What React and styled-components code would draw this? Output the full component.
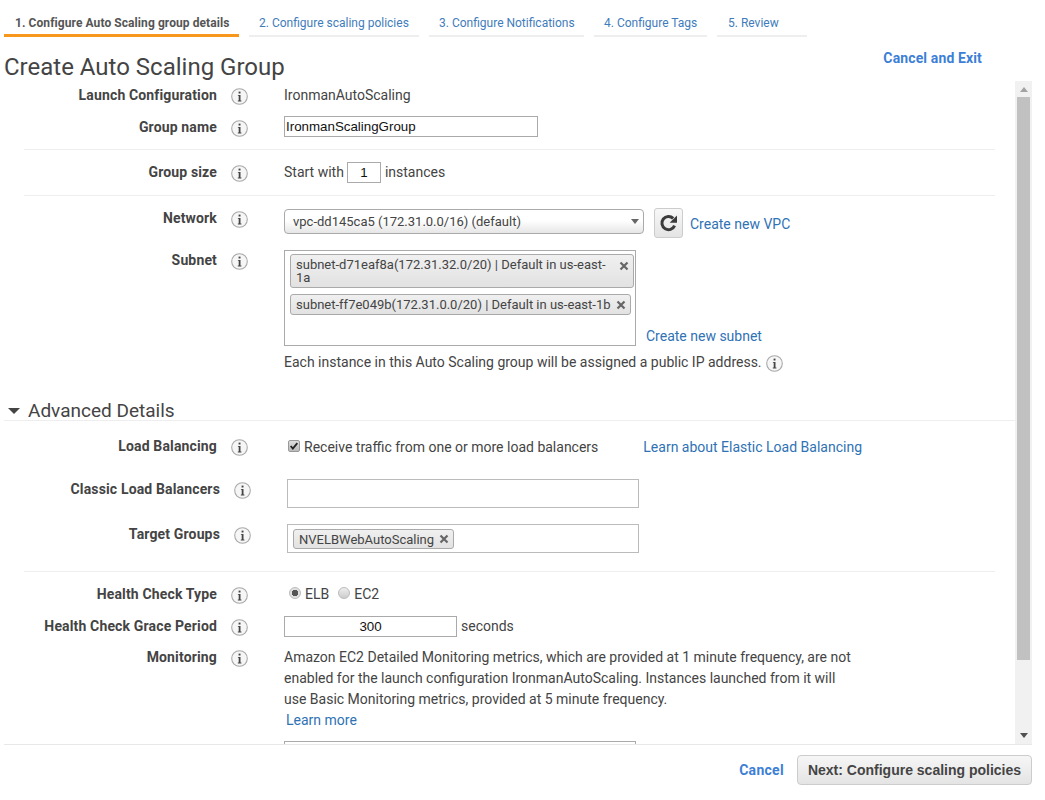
import React from 'react';
import styled, { createGlobalStyle } from 'styled-components';

const GlobalStyle = createGlobalStyle`
  html, body {
    margin: 0;
    height: 800px;
    overflow: hidden;
    background: #fff;
    font-family: Roboto, "Liberation Sans", sans-serif;
    font-size: 14px;
    color: #444;
  }
`;

const tabs = [
  { label: '1. Configure Auto Scaling group details', width: 235, pad: 11, active: true },
  { label: '2. Configure scaling policies', width: 170, pad: 10 },
  { label: '3. Configure Notifications', width: 155, pad: 10 },
  { label: '4. Configure Tags', width: 113, pad: 10 },
  { label: '5. Review', width: 90, pad: 11 }
];

const InfoIcon = () => (
  <InfoSvg viewBox="0 0 17 17">
    <circle cx="8.5" cy="8.5" r="7.8" fill="#f6f6f6" stroke="#a8a8a8" strokeWidth="1.1" />
    <rect x="7.6" y="3.6" width="1.9" height="1.9" fill="#444" />
    <path d="M6.9 6.9h2.6v5.6h.9v.9H6.8v-.9h.9V7.8h-.8z" fill="#444" />
  </InfoSvg>
);

const CloseIcon = () => (
  <CloseSvg viewBox="0 0 10 10">
    <path d="M1.5 1.5l7 7M8.5 1.5l-7 7" stroke="#666" strokeWidth="2.2" />
  </CloseSvg>
);

const RefreshIcon = () => (
  <svg viewBox="0 0 20 20" width="20" height="20">
    <path d="M15.6 12.6A6.6 6.6 0 1 1 14.2 5.4" fill="none" stroke="#3c3c3c" strokeWidth="3" />
    <path d="M18 2.4v7.4h-7.4z" fill="#3c3c3c" />
  </svg>
);

const Field = ({ label, wide, children }) => (
  <>
    <Label $wide={wide}>{label}</Label>
    <InfoIcon />
    <Value>{children}</Value>
  </>
);

export default function App() {
  return (
    <Page>
      <GlobalStyle />
      <Tabs>
        {tabs.map(tab => (
          <Tab key={tab.label} $active={tab.active} $width={tab.width} $pad={tab.pad}>
            {tab.label}
          </Tab>
        ))}
      </Tabs>
      <Header>
        <Title>Create Auto Scaling Group</Title>
        <CancelExit href="#">Cancel and Exit</CancelExit>
      </Header>
      <Panel>
        <Form>
          <Row $mt={4}>
            <Field label="Launch Configuration">IronmanAutoScaling</Field>
          </Row>
          <Row $mt={12}>
            <Field label="Group name">
              <TextInput $width={254} $lift readOnly value="IronmanScalingGroup" />
            </Field>
          </Row>
          <Divider $mt={12} />
          <Row $mt={12}>
            <Field label="Group size">
              <Inline $top $gap={4}>
                Start with
                <SizeInput $width={34} $center readOnly value="1" />
                instances
              </Inline>
            </Field>
          </Row>
          <Divider $mt={12} />
          <Row $mt={12}>
            <Field label="Network">
              <Inline $top $gap={10}>
                <Select>
                  vpc-dd145ca5 (172.31.0.0/16) (default)
                  <Caret />
                </Select>
                <RefreshButton>
                  <RefreshIcon />
                </RefreshButton>
                <VpcLink href="#">Create new VPC</VpcLink>
              </Inline>
            </Field>
          </Row>
          <Row $mt={12}>
            <Field label="Subnet">
              <SubnetRow>
                <ChipBox>
                  <Chip $wrap>
                    <span>subnet-d71eaf8a(172.31.32.0/20) | Default in us-east-1a</span>
                    <CloseIcon />
                  </Chip>
                  <Chip>
                    <span>subnet-ff7e049b(172.31.0.0/20) | Default in us-east-1b</span>
                    <CloseIcon />
                  </Chip>
                </ChipBox>
                <LinkText href="#">Create new subnet</LinkText>
              </SubnetRow>
              <Note>
                Each instance in this Auto Scaling group will be assigned a public IP address.
                <InfoIcon />
              </Note>
            </Field>
          </Row>
          <AdvancedHeader>
            <Triangle />
            Advanced Details
          </AdvancedHeader>
          <Row $mt={15}>
            <Field label="Load Balancing">
              <Inline $gap={4} $indent={4} $drop={1}>
                <Checkbox>
                  <svg viewBox="0 0 12 12" width="10" height="10">
                    <path d="M2 6l2.6 3L10 2.5" fill="none" stroke="#222" strokeWidth="2.2" />
                  </svg>
                </Checkbox>
                Receive traffic from one or more load balancers
                <LinkText href="#" $left={41}>Learn about Elastic Load Balancing</LinkText>
              </Inline>
            </Field>
          </Row>
          <Row $mt={22}>
            <Field label="Classic Load Balancers" wide>
              <ChipInput />
            </Field>
          </Row>
          <Row $mt={16}>
            <Field label="Target Groups" wide>
              <ChipInput>
                <Chip $small>
                  <span>NVELBWebAutoScaling</span>
                  <CloseIcon />
                </Chip>
              </ChipInput>
            </Field>
          </Row>
          <Divider $mt={18} />
          <Row $mt={12}>
            <Field label="Health Check Type">
              <Inline $gap={4} $indent={5}>
                <Radio $checked />
                ELB
                <Radio $left={5} />
                EC2
              </Inline>
            </Field>
          </Row>
          <Row $mt={12}>
            <Field label="Health Check Grace Period">
              <Inline $top>
                <TextInput $width={173} $center readOnly value="300" />
                seconds
              </Inline>
            </Field>
          </Row>
          <Row $mt={10}>
            <Field label="Monitoring">
              <Paragraph>
                Amazon EC2 Detailed Monitoring metrics, which are provided at 1 minute frequency, are not
                <br />
                enabled for the launch configuration IronmanAutoScaling. Instances launched from it will
                <br />
                use Basic Monitoring metrics, provided at 5 minute frequency.
                <br />
                <LinkText href="#" $left={2}>Learn more</LinkText>
              </Paragraph>
              <CutOffBox />
            </Field>
          </Row>
        </Form>
        <Scrollbar>
          <ArrowUp />
          <Thumb />
          <ArrowDown />
        </Scrollbar>
      </Panel>
      <Footer>
        <CancelLink href="#">Cancel</CancelLink>
        <NextButton>Next: Configure scaling policies</NextButton>
      </Footer>
    </Page>
  );
}

const Page = styled.div`
  width: 1045px;
  height: 800px;
  box-sizing: border-box;
  padding: 0 13px 0 4px;
  overflow: hidden;
`;

const Tabs = styled.div`
  display: flex;
  gap: 10px;
  height: 37px;
`;

const Tab = styled.div`
  width: ${p => p.$width}px;
  box-sizing: border-box;
  padding: 14px 0 0 ${p => p.$pad}px;
  font-size: 12px;
  line-height: 18px;
  white-space: nowrap;
  font-weight: ${p => (p.$active ? 700 : 400)};
  letter-spacing: ${p => (p.$active ? '0.08px' : '0')};
  color: ${p => (p.$active ? '#555' : '#3f7cbb')};
  border-bottom: ${p => (p.$active ? '3px solid #f7981d' : '2px solid #eee')};
`;

const Header = styled.div`
  display: flex;
  justify-content: space-between;
  height: 44px;
`;

const Title = styled.h1`
  margin: 16px 0 0;
  font-size: 24px;
  line-height: 28px;
  font-weight: 400;
  color: #444;
`;

const CancelExit = styled.a`
  margin: 11px 50px 0 0;
  line-height: 20px;
  font-size: 14px;
  font-weight: 700;
  letter-spacing: 0.13px;
  color: #3d7fd6;
  text-decoration: none;
`;

const Panel = styled.div`
  display: flex;
  height: 664px;
  box-sizing: border-box;
  border-bottom: 1px solid #e8e8e8;
`;

const Form = styled.div`
  flex: 1;
  min-width: 0;
  overflow: hidden;
`;

const Row = styled.div`
  display: flex;
  align-items: flex-start;
  margin-top: ${p => p.$mt}px;
  min-height: 20px;
  line-height: 20px;
`;

const Label = styled.div`
  width: ${p => (p.$wide ? 216 : 213)}px;
  flex: none;
  margin-right: 14px;
  text-align: right;
  font-weight: 700;
  letter-spacing: 0.15px;
  color: #444;
  white-space: nowrap;
`;

const InfoSvg = styled.svg`
  width: 17px;
  height: 17px;
  flex: none;
  margin-top: 3px;
`;

const CloseSvg = styled.svg`
  width: 10px;
  height: 10px;
  flex: none;
`;

const Value = styled.div`
  flex: 1;
  min-width: 0;
  margin-left: 36px;
  color: #444;
`;

const Inline = styled.div`
  display: flex;
  align-items: ${p => (p.$top ? 'flex-start' : 'center')};
  gap: ${p => p.$gap ?? 4}px;
  padding-left: ${p => p.$indent ?? 0}px;
  padding-top: ${p => p.$drop ?? 0}px;
  white-space: nowrap;
`;

const TextInput = styled.input`
  display: block;
  width: ${p => p.$width}px;
  height: 21px;
  box-sizing: border-box;
  margin: ${p => (p.$lift ? '-1px 0 0' : '0')};
  padding: 0 1px;
  border: 1px solid #aaa;
  border-radius: 0;
  outline: none;
  background: #fff;
  font: 13.33px "Liberation Sans", Arial, sans-serif;
  color: #111;
  text-align: ${p => (p.$center ? 'center' : 'left')};
`;

const SizeInput = styled(TextInput)`
  margin-left: -1px;
`;

const Divider = styled.div`
  height: 1px;
  margin: ${p => p.$mt}px 20px 0 20px;
  background: #eee;
`;

const Select = styled.div`
  position: relative;
  width: 360px;
  height: 25px;
  box-sizing: border-box;
  margin-top: 1px;
  padding-left: 8px;
  font-size: 13px;
  line-height: 23px;
  border: 1px solid #aaa;
  border-radius: 4px;
  background: linear-gradient(#fff 45%, #e6e6e6);
`;

const Caret = styled.span`
  position: absolute;
  right: 4px;
  top: 9px;
  border: 4px solid transparent;
  border-top: 5px solid #666;
  border-bottom: 0;
`;

const RefreshButton = styled.div`
  display: flex;
  align-items: center;
  justify-content: center;
  width: 29px;
  height: 30px;
  box-sizing: border-box;
  border: 1px solid #ccc;
  border-radius: 3px;
  background: linear-gradient(#f8f8f8, #e4e4e4);
`;

const LinkText = styled.a`
  margin-left: ${p => p.$left ?? 0}px;
  color: #2f72b5;
  text-decoration: none;
`;

const VpcLink = styled(LinkText)`
  margin-left: -3px;
  margin-top: 6px;
`;

const SubnetRow = styled.div`
  display: flex;
  align-items: flex-end;
  gap: 10px;
  white-space: nowrap;
`;

const ChipBox = styled.div`
  width: 352px;
  height: 96px;
  box-sizing: border-box;
  flex: none;
  padding: 3px 0 0 5px;
  border: 1px solid #aaa;
  display: flex;
  flex-direction: column;
  align-items: flex-start;
  gap: 6px;
`;

const Chip = styled.div`
  display: flex;
  align-items: ${p => (p.$wrap ? 'flex-start' : 'center')};
  justify-content: space-between;
  gap: 5px;
  width: ${p => (p.$wrap ? '344px' : 'auto')};
  box-sizing: border-box;
  padding: ${p => (p.$wrap ? '3px 4px 3px 5px' : '0 4px 0 5px')};
  min-height: ${p => (p.$small ? 20 : 21)}px;
  font-size: 13px;
  line-height: 13px;
  white-space: ${p => (p.$wrap ? 'normal' : 'nowrap')};
  color: #444;
  border: 1px solid #aaa;
  border-radius: 3px;
  background: linear-gradient(#f0f0f0, #e2e2e2);
  svg {
    margin-top: ${p => (p.$wrap ? '3px' : '0')};
  }
`;

const Note = styled.div`
  display: flex;
  gap: 4px;
  margin-top: 6px;
  white-space: nowrap;
`;

const AdvancedHeader = styled.div`
  display: flex;
  align-items: flex-start;
  gap: 8px;
  height: 20px;
  margin-top: 28px;
  padding-left: 4px;
  font-size: 19px;
  line-height: 22px;
  color: #444;
  border-bottom: 1px solid #eee;
`;

const Triangle = styled.span`
  width: 0;
  height: 0;
  margin-top: 8px;
  border: 6px solid transparent;
  border-top: 6px solid #444;
  border-bottom: 0;
`;

const Checkbox = styled.span`
  display: flex;
  align-items: center;
  justify-content: center;
  width: 12px;
  height: 12px;
  box-sizing: border-box;
  margin-top: -3px;
  border: 1px solid #999;
  border-radius: 2px;
  background: linear-gradient(#ddd, #bbb);
`;

const ChipInput = styled.div`
  width: 352px;
  height: 29px;
  box-sizing: border-box;
  padding: 4px 5px;
  display: flex;
  align-items: flex-start;
  border: 1px solid #bbb;
  background: #fff;
`;

const Radio = styled.span`
  width: 12px;
  height: 12px;
  margin-top: -3px;
  margin-left: ${p => p.$left ?? 0}px;
  box-sizing: border-box;
  border: 1px solid #bbb;
  border-radius: 50%;
  background: ${p =>
    p.$checked
      ? 'radial-gradient(circle, #555 0 3px, #e0e0e0 3.5px)'
      : 'linear-gradient(#eee, #ccc)'};
`;

const Paragraph = styled.div`
  line-height: 21px;
  white-space: nowrap;
`;

const CutOffBox = styled.div`
  width: 352px;
  height: 60px;
  margin-top: 10px;
  box-sizing: border-box;
  border: 1px solid #aaa;
`;

const Scrollbar = styled.div`
  display: flex;
  flex-direction: column;
  align-items: center;
  flex: none;
  width: 17px;
  background: #f1f1f1;
`;

const ArrowUp = styled.span`
  margin: 6px 0 5px;
  border: 4px solid transparent;
  border-bottom: 5px solid #a3a3a3;
  border-top: 0;
`;

const Thumb = styled.div`
  width: 13px;
  height: 563px;
  background: #c1c1c1;
`;

const ArrowDown = styled.span`
  margin: auto 0 6px;
  border: 4px solid transparent;
  border-top: 5px solid #505050;
  border-bottom: 0;
`;

const Footer = styled.div`
  display: flex;
  justify-content: flex-end;
  align-items: center;
  gap: 13px;
  padding-top: 10px;
`;

const CancelLink = styled.a`
  font-weight: 700;
  letter-spacing: 0.3px;
  color: #3d7fd6;
  text-decoration: none;
`;

const NextButton = styled.button`
  width: 235px;
  height: 30px;
  padding: 0;
  border: 1px solid #ccc;
  border-radius: 4px;
  background: linear-gradient(#f6f6f6, #e4e4e4);
  font: 700 14px "Liberation Sans", Arial, sans-serif;
  color: #444;
`;
